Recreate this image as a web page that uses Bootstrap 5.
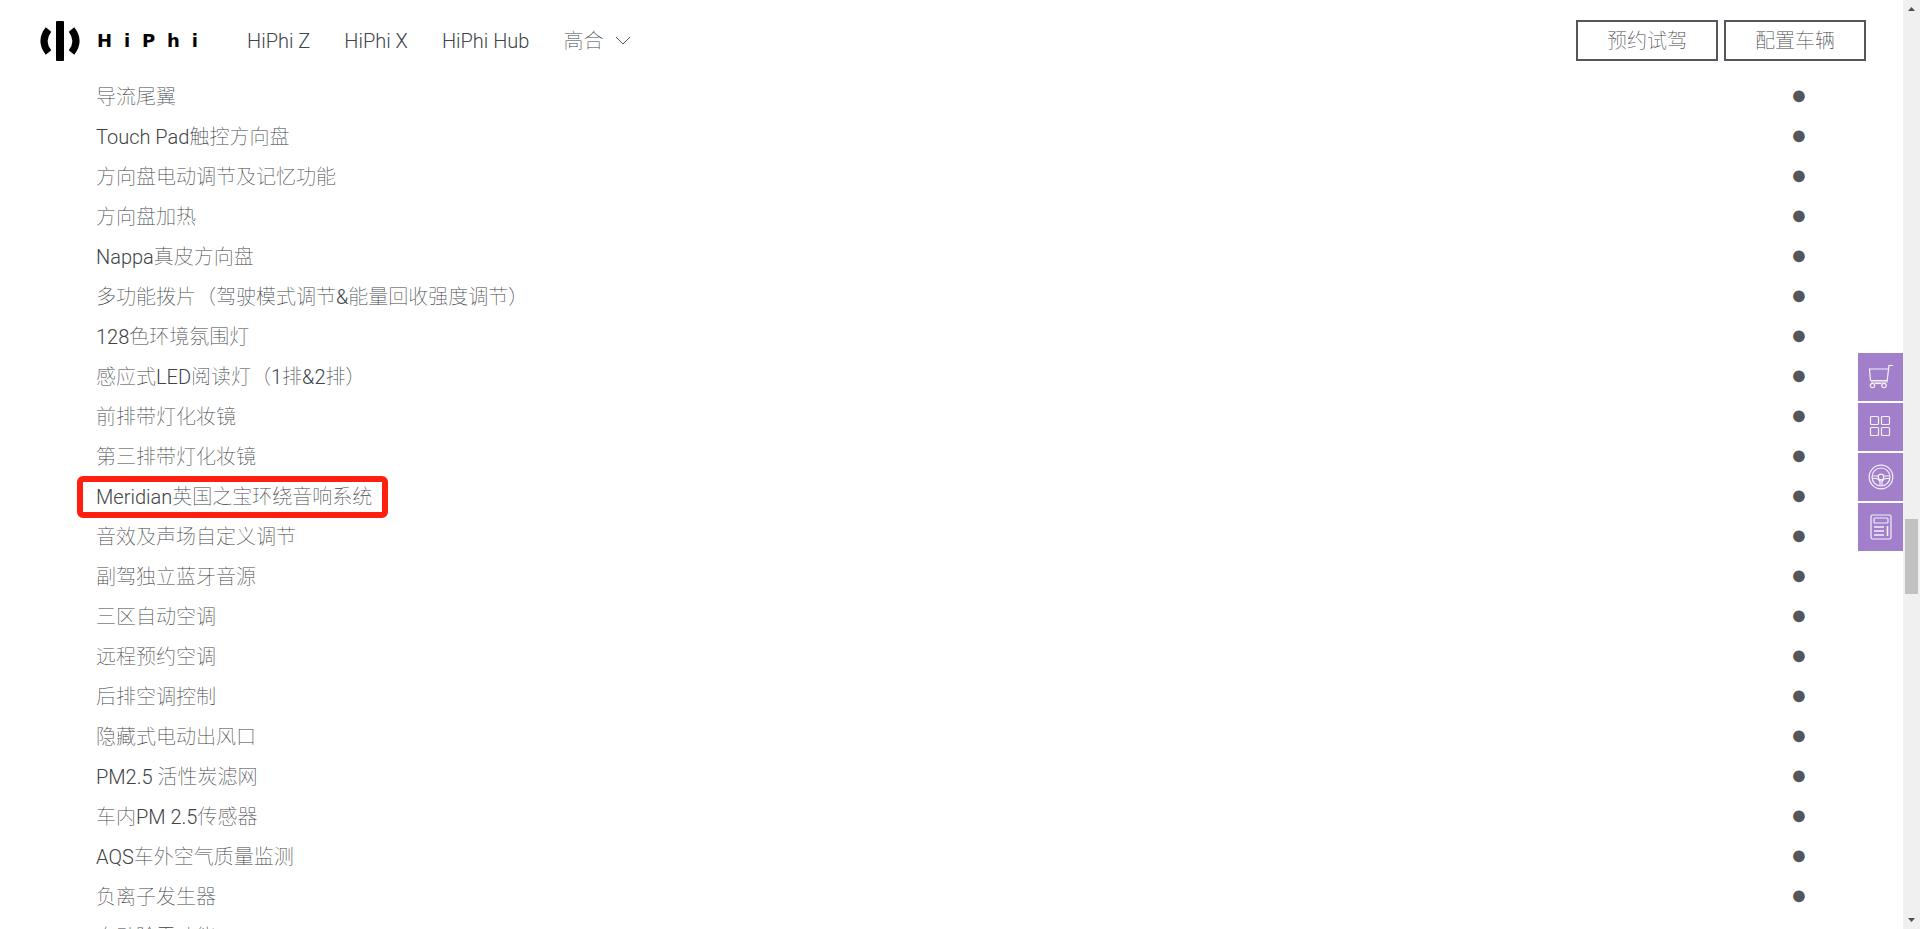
<!DOCTYPE html>
<html lang="zh-CN">
<head>
<meta charset="utf-8">
<meta name="viewport" content="width=device-width, initial-scale=1">
<title>HiPhi 配置表</title>
<link href="https://cdn.jsdelivr.net/npm/bootstrap@5.3.0/dist/css/bootstrap.min.css" rel="stylesheet">
<style>
:root { --ink: #53565a; --text: #404347; --violet: #a17fcb; }
body { font-family: Roboto, "Noto Sans CJK SC Thin", "Noto Sans CJK SC Light", "Noto Sans CJK SC", sans-serif; font-size: 20px; font-weight: 300; line-height: 24px; color: var(--text); background: #fff; }
.shell { height: 100vh; }
.site-header { padding: 20px 37px 16px 40px; }
.brand { color: #000; gap: 16px; width: 158px; }
.wordmark { font: 700 18px/20px "DejaVu Sans", sans-serif; }
.site-menu { margin-left: 49px; gap: 34px; }
.site-menu a { color: var(--text); }
.btn-outline { width: 142px; height: 41px; border: 2px solid var(--ink); border-radius: 0; color: var(--text); font-size: 20px; font-weight: 300; line-height: 24px; padding: 0; }
.btn-outline:hover { background: var(--ink); color: #fff; }
.header-actions { gap: 6px; }
.spec-table { color: var(--text); }
.spec-table th { height: 40px; padding: 0 0 0 96px; font-weight: 300; text-align: left; white-space: nowrap; }
.spec-table td { width: 208px; padding: 0 0 4px; text-align: center; font-family: "Liberation Sans", sans-serif; font-size: 27px; color: var(--ink); }
.marked { position: relative; }
.marked::after { content: ""; position: absolute; inset: -9px -16px -9px -19px; border: 6px solid #ff1e10; border-radius: 6px; }
.quick-bar { position: absolute; right: 0; top: 353px; gap: 2px; }
.quick-bar button { width: 45px; height: 48px; padding: 0; border: 0; background: var(--violet); display: flex; align-items: center; justify-content: center; }
.quick-bar svg { fill: none; stroke: #fff; stroke-width: 1.2; opacity: .9; }
.scroll-rail { width: 17px; background: #f0f0f0; padding: 7px 0; }
.scroll-rail svg { fill: #505050; }
.scroll-thumb { width: 13px; height: 75px; background: #c1c1c1; }
.track-before { flex: 61 0 0; }
.track-after { flex: 39 0 0; }
</style>
</head>
<body class="overflow-hidden">
<div class="shell d-flex overflow-hidden">
  <div class="flex-grow-1 position-relative overflow-hidden">
    <header class="site-header d-flex align-items-center">
      <a href="#" class="brand d-flex align-items-center text-decoration-none" aria-label="HiPhi">
        <svg width="41" height="40" viewBox="0 0 41 40" fill="none" stroke="#000" aria-hidden="true">
          <rect x="16" y="0" width="8" height="40" rx="1" fill="#000" stroke="none"/>
          <path d="M8.500 8.500Q-.5 20 8.500 31.500M31.500 8.500Q40.500 20 31.500 31.500" stroke-width="7"/>
        </svg>
        <span class="wordmark d-flex flex-grow-1 justify-content-between"><span>H</span><span>i</span><span>P</span><span>h</span><span>i</span></span>
      </a>
      <nav class="site-menu d-flex align-items-center">
        <a href="#" class="text-decoration-none">HiPhi Z</a>
        <a href="#" class="text-decoration-none">HiPhi X</a>
        <a href="#" class="text-decoration-none">HiPhi Hub</a>
        <a href="#" class="text-decoration-none d-flex align-items-center">高合
          <svg class="ms-2" width="22" height="16" viewBox="0 0 22 16" fill="none" stroke="#53565a" aria-hidden="true"><path d="M5 4l7 7 7-7"/></svg></a>
      </nav>
      <div class="header-actions d-flex ms-auto">
        <button type="button" class="btn btn-outline">预约试驾</button>
        <button type="button" class="btn btn-outline">配置车辆</button>
      </div>
    </header>
    <table class="spec-table w-100">
      <tbody>
        <tr><th scope="row">导流尾翼</th><td>●</td></tr>
        <tr><th scope="row">Touch Pad触控方向盘</th><td>●</td></tr>
        <tr><th scope="row">方向盘电动调节及记忆功能</th><td>●</td></tr>
        <tr><th scope="row">方向盘加热</th><td>●</td></tr>
        <tr><th scope="row">Nappa真皮方向盘</th><td>●</td></tr>
        <tr><th scope="row">多功能拨片（驾驶模式调节&amp;能量回收强度调节）</th><td>●</td></tr>
        <tr><th scope="row">128色环境氛围灯</th><td>●</td></tr>
        <tr><th scope="row">感应式LED阅读灯（1排&amp;2排）</th><td>●</td></tr>
        <tr><th scope="row">前排带灯化妆镜</th><td>●</td></tr>
        <tr><th scope="row">第三排带灯化妆镜</th><td>●</td></tr>
        <tr><th scope="row"><span class="marked">Meridian英国之宝环绕音响系统</span></th><td>●</td></tr>
        <tr><th scope="row">音效及声场自定义调节</th><td>●</td></tr>
        <tr><th scope="row">副驾独立蓝牙音源</th><td>●</td></tr>
        <tr><th scope="row">三区自动空调</th><td>●</td></tr>
        <tr><th scope="row">远程预约空调</th><td>●</td></tr>
        <tr><th scope="row">后排空调控制</th><td>●</td></tr>
        <tr><th scope="row">隐藏式电动出风口</th><td>●</td></tr>
        <tr><th scope="row">PM2.5 活性炭滤网</th><td>●</td></tr>
        <tr><th scope="row">车内PM 2.5传感器</th><td>●</td></tr>
        <tr><th scope="row">AQS车外空气质量监测</th><td>●</td></tr>
        <tr><th scope="row">负离子发生器</th><td>●</td></tr>
        <tr><th scope="row">自动除雾功能</th><td></td></tr>
      </tbody>
    </table>
    <div class="quick-bar d-flex flex-column">
      <button type="button" aria-label="购物车"><svg width="26" height="26" viewBox="0 0 26 26"><path d="M25 1.500h-4L19 18H3M20.500 5H1.500l1 11.500h16.500"/><circle cx="4.500" cy="21.500" r="2.200"/><circle cx="16" cy="21.500" r="2.200"/><path d="M7 19.500h6.500"/></svg></button>
      <button type="button" aria-label="车型"><svg width="23" height="24" viewBox="0 0 23 24"><rect x="1.500" y="1.500" width="8" height="8" rx="1"/><rect x="12.500" y="1.500" width="8" height="8" rx="1"/><rect x="1.500" y="12.500" width="8" height="8" rx="1"/><rect x="12.500" y="12.500" width="8" height="8" rx="1"/></svg></button>
      <button type="button" aria-label="试驾"><svg width="26" height="26" viewBox="0 0 26 26"><circle cx="13" cy="13" r="11.800"/><circle cx="13" cy="13" r="9"/><circle cx="13" cy="13" r="2.800"/><path d="M4.200 12h6M15.800 12h6M4.500 14.500H8q3 .5 3.500 3M21.500 14.500H18q-3 .5-3.500 3M12 15.500v6M14 15.500v6"/></svg></button>
      <button type="button" aria-label="资讯"><svg width="22" height="26" viewBox="0 0 22 26"><rect x="1" y="1" width="20" height="24" rx="1.500"/><rect x="4" y="4" width="14" height="5" rx="1"/><path d="M4 13h10M4 17h10M4 21h10M17.500 12v10" stroke-width="1.600"/></svg></button>
    </div>
  </div>
  <div class="scroll-rail d-flex flex-column align-items-center flex-shrink-0" aria-hidden="true">
    <svg width="7" height="4"><path d="M0 4L3.500 0 7 4z"/></svg>
    <div class="track-before"></div>
    <div class="scroll-thumb"></div>
    <div class="track-after"></div>
    <svg width="7" height="4"><path d="M0 0L3.500 4 7 0z"/></svg>
  </div>
</div>
<script src="https://cdn.jsdelivr.net/npm/bootstrap@5.3.0/dist/js/bootstrap.bundle.min.js"></script>
</body>
</html>
